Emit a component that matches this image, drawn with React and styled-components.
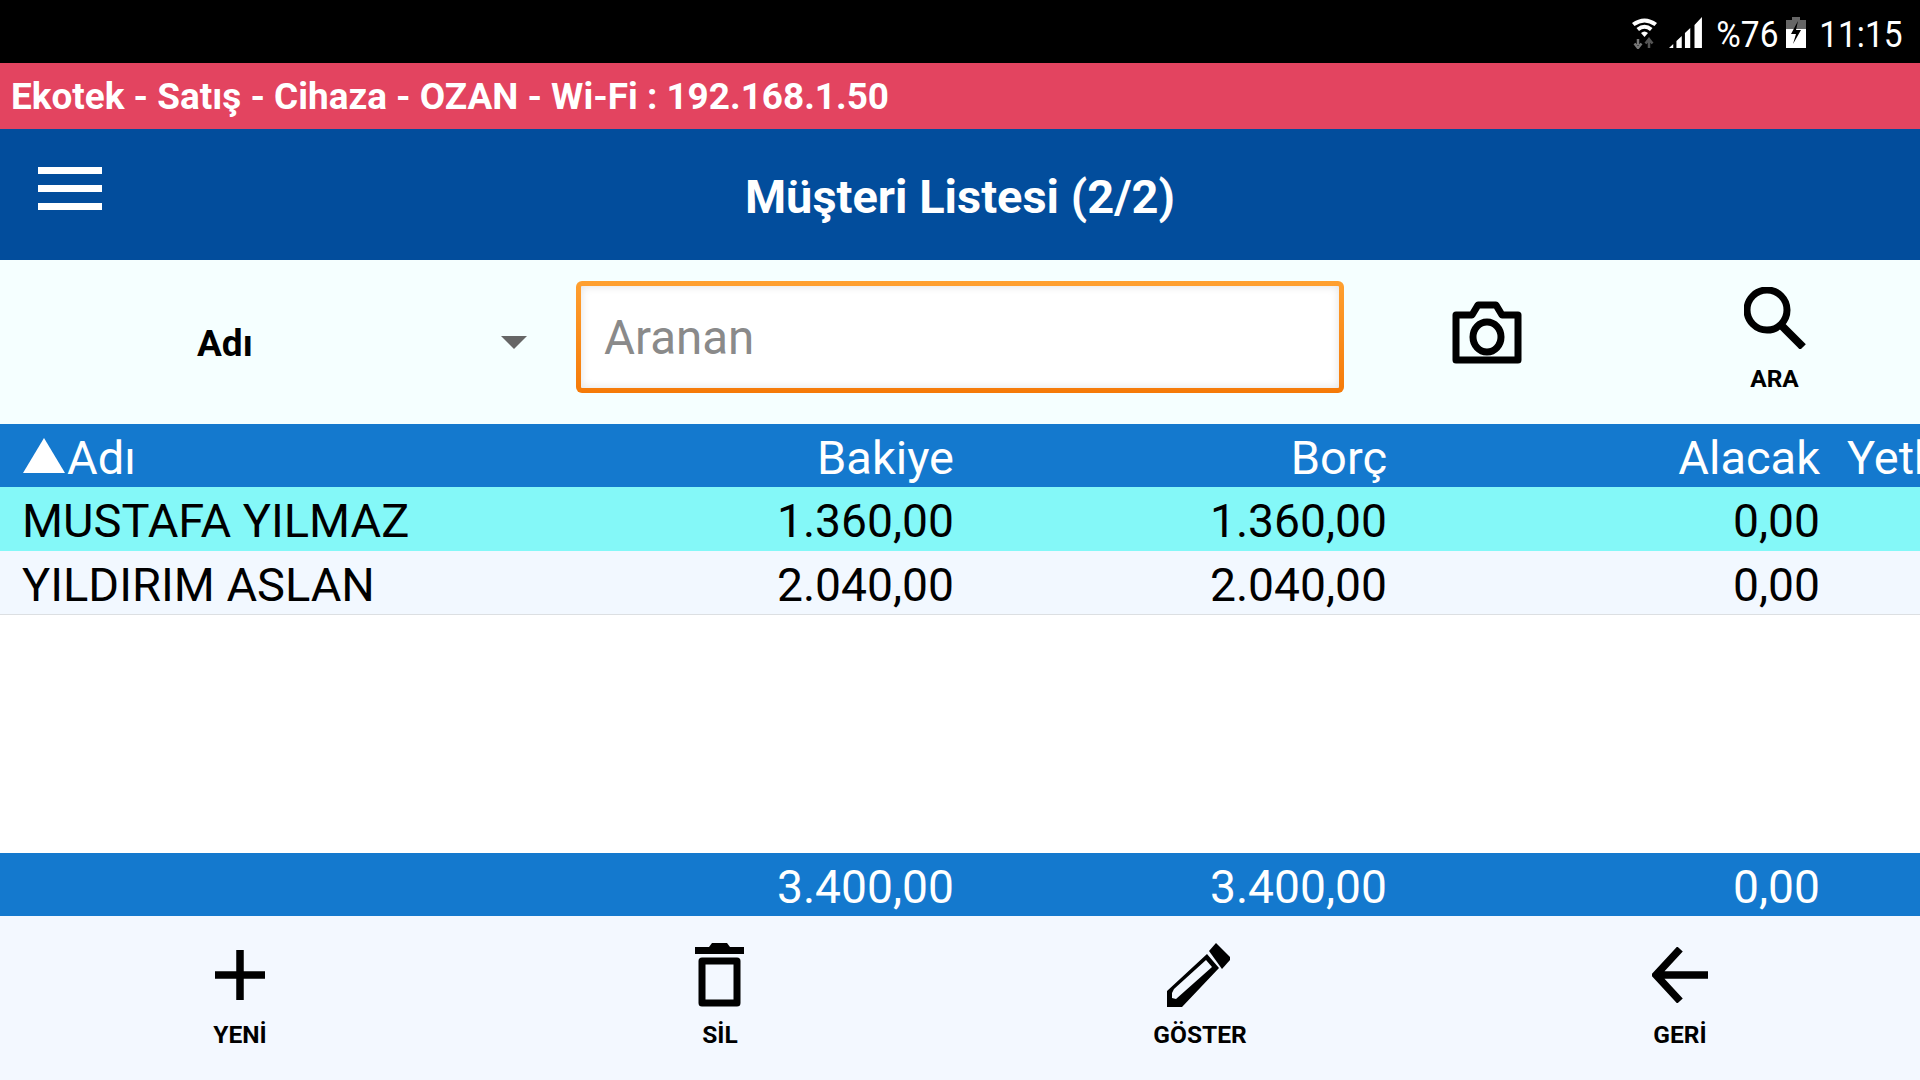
import React from 'react';
import styled, { createGlobalStyle } from 'styled-components';

const GlobalStyle = createGlobalStyle`
  html, body {
    margin: 0;
    padding: 0;
    background: #fff;
    overflow: hidden;
  }
  * { box-sizing: border-box; }
`;

const Page = styled.div`
  width: 1920px;
  height: 1080px;
  display: flex;
  flex-direction: column;
  overflow: hidden;
  font-family: Roboto, "Liberation Sans", sans-serif;
`;

const StatusBar = styled.div`
  height: 63px;
  background: #000;
  color: #fff;
  display: flex;
  align-items: center;
  justify-content: flex-end;
  padding: 2px 14px 0 0;
  font-size: 36px;
  line-height: 63px;
`;

const StatusText = styled.span`
  display: inline-block;
  position: relative;
  top: 3px;
  transform: scaleX(0.93);
  margin: ${(p) => p.$margin || '0'};
`;

const SystemIcon = styled.svg`
  display: block;
  flex: none;
  margin: ${(p) => p.$margin || '0'};
`;

const AppTitle = styled.div`
  height: 66px;
  background: #e34460;
  color: #fff;
  padding-left: 11px;
  font-size: 36.9px;
  font-weight: 700;
  line-height: 68px;
  white-space: nowrap;
`;

const NavBar = styled.div`
  height: 131px;
  background: #024d9c;
  position: relative;
  display: flex;
  align-items: center;
  justify-content: center;
  color: #fff;
  font-size: 47px;
  font-weight: 700;
  padding-top: 4px;
`;

const Burger = styled.div`
  position: absolute;
  left: 38px;
  top: 38px;
  width: 64px;
  display: flex;
  flex-direction: column;
  gap: 11px;
  span {
    display: block;
    height: 7px;
    background: #fff;
  }
`;

const SearchBar = styled.div`
  height: 164px;
  background: #f5ffff;
  display: flex;
  align-items: flex-start;
`;

const SelectBox = styled.div`
  width: 576px;
  height: 100%;
  padding: 57px 49px 0 197px;
  display: flex;
  justify-content: space-between;
  font-size: 37px;
  font-weight: 700;
  color: #000;
  line-height: 54px;
`;

const Caret = styled.div`
  width: 0;
  height: 0;
  margin-top: 19px;
  border-left: 13.5px solid transparent;
  border-right: 13.5px solid transparent;
  border-top: 13px solid #666;
`;

const SearchInput = styled.div`
  width: 768px;
  height: 112px;
  margin-top: 21px;
  padding: 6px 0 0 23px;
  border: 5px solid transparent;
  border-radius: 6px;
  background:
    linear-gradient(#fff, #fff) padding-box,
    linear-gradient(#ffa030, #f57a08) border-box;
  box-shadow: inset 0 0 10px rgba(0, 0, 0, 0.12);
  color: #8a8a8a;
  font-size: 47.5px;
  line-height: 92px;
`;

const CameraSlot = styled.div`
  width: 285px;
  display: flex;
  justify-content: center;
  padding-top: 41px;
`;

const SearchSlot = styled.div`
  width: 291px;
  display: flex;
  flex-direction: column;
  align-items: center;
  padding-top: 27px;
`;

const ToolIcon = styled.svg`
  display: block;
  flex: none;
  margin-left: ${(p) => p.$shift || 0}px;
`;

const ToolLabel = styled.div`
  font-size: 24.5px;
  font-weight: 700;
  line-height: 24px;
  color: #000;
  text-align: center;
  margin-top: ${(p) => p.$gap}px;
`;

const Row = styled.div`
  height: ${(p) => p.$height || 63}px;
  background: ${(p) => p.$bg};
  color: ${(p) => p.$color};
  border-bottom: ${(p) => (p.$line ? '1px solid #dcdfe2' : 'none')};
  display: grid;
  grid-template-columns: 521px 433px 433px 433px 100px;
  font-size: 47px;
  line-height: 68px;
  white-space: nowrap;
  overflow: hidden;
`;

const NameCell = styled.div`
  padding-left: 22px;
  display: flex;
  align-items: flex-start;
`;

const NumberCell = styled.div`
  text-align: right;
  font-size: ${(p) => (p.$heading ? 47 : 46.2)}px;
`;

const ExtraCell = styled.div`
  padding-left: 27px;
`;

const SortArrow = styled.div`
  width: 0;
  height: 0;
  margin: 14px 2px 0 1px;
  border-left: 21px solid transparent;
  border-right: 21px solid transparent;
  border-bottom: 35px solid #fff;
`;

const Blank = styled.div`
  flex: 1;
  background: #fff;
`;

const ToolBar = styled.div`
  height: 164px;
  background: #f3f8ff;
  display: grid;
  grid-template-columns: repeat(4, 480px);
`;

const ToolButton = styled.div`
  display: flex;
  flex-direction: column;
  align-items: center;
  padding-top: ${(p) => p.$top}px;
`;

const rows = [
  { name: 'MUSTAFA YILMAZ', bakiye: '1.360,00', borc: '1.360,00', alacak: '0,00', bg: '#84f8f8', line: false },
  { name: 'YILDIRIM ASLAN', bakiye: '2.040,00', borc: '2.040,00', alacak: '0,00', bg: '#f2f8ff', line: true },
];

function App() {
  return (
    <Page>
      <GlobalStyle />
      <StatusBar>
        <SystemIcon width="27" height="32" viewBox="0 0 27 32" $margin="0 11px 0 0">
          <path d="M1 6 Q13.5 -3 26 6 L23.5 9 Q13.5 2 3.5 9Z M5.5 11 Q13.5 4.5 21.5 11 L19 14 Q13.5 9.5 8 14Z M10 16 Q13.5 13 17 16 L13.5 20Z" fill="#fff" />
          <path d="M7 22v6M3.5 26.5L7 31l3.5-4.5" stroke="#777" strokeWidth="2.5" fill="none" />
          <path d="M18 31v-8M14.5 26.5L18 22l3.5 4.5" stroke="#555" strokeWidth="2.5" fill="none" />
        </SystemIcon>
        <SystemIcon width="34" height="31" viewBox="0 0 32 31" preserveAspectRatio="none" $margin="0 12px 0 0">
          <path d="M0 31L4 27V31Z M7 31V24L12 19V31Z M15 31V16L20 11V31Z M24 31V8L31 0V31Z" fill="#fff" />
        </SystemIcon>
        <StatusText $margin="0 0 0 -1px">%76</StatusText>
        <SystemIcon width="20" height="31" viewBox="0 0 20 31" $margin="0 10px 0 6px">
          <path d="M6 0H14V3H20V12H0V3H6Z" fill="#666" />
          <path d="M0 12H20V31H0Z" fill="#fff" />
          <path d="M12 4L5 17H10L7 27L15 13H10Z" fill="#000" />
        </SystemIcon>
        <StatusText>11:15</StatusText>
      </StatusBar>

      <AppTitle>Ekotek - Satış - Cihaza - OZAN - Wi-Fi : 192.168.1.50</AppTitle>

      <NavBar>
        <Burger>
          <span />
          <span />
          <span />
        </Burger>
        Müşteri Listesi (2/2)
      </NavBar>

      <SearchBar>
        <SelectBox>
          Adı
          <Caret />
        </SelectBox>
        <SearchInput>Aranan</SearchInput>
        <CameraSlot>
          <ToolIcon width="70" height="63" viewBox="0 0 70 63">
            <path d="M4 14H20L26 4H44L50 14H66V59H4Z" fill="none" stroke="#000" strokeWidth="7" strokeLinejoin="round" />
            <ellipse cx="35" cy="36" rx="14" ry="15" fill="none" stroke="#000" strokeWidth="7" />
          </ToolIcon>
        </CameraSlot>
        <SearchSlot>
          <ToolIcon width="62" height="62" viewBox="0 0 62 62">
            <ellipse cx="23" cy="23" rx="20" ry="20" fill="none" stroke="#000" strokeWidth="7" />
            <path d="M38 39L59 60" stroke="#000" strokeWidth="8" />
          </ToolIcon>
          <ToolLabel $gap={18}>ARA</ToolLabel>
        </SearchSlot>
      </SearchBar>

      <Row $bg="#1479ce" $color="#fff">
        <NameCell>
          <SortArrow />
          Adı
        </NameCell>
        <NumberCell $heading>Bakiye</NumberCell>
        <NumberCell $heading>Borç</NumberCell>
        <NumberCell $heading>Alacak</NumberCell>
        <ExtraCell>Yetkili</ExtraCell>
      </Row>
      {rows.map((r) => (
        <Row key={r.name} $bg={r.bg} $color="#000" $line={r.line} $height={64}>
          <NameCell>{r.name}</NameCell>
          <NumberCell>{r.bakiye}</NumberCell>
          <NumberCell>{r.borc}</NumberCell>
          <NumberCell>{r.alacak}</NumberCell>
        </Row>
      ))}

      <Blank />

      <Row $bg="#1479ce" $color="#fff">
        <NameCell />
        <NumberCell>3.400,00</NumberCell>
        <NumberCell>3.400,00</NumberCell>
        <NumberCell>0,00</NumberCell>
      </Row>

      <ToolBar>
        <ToolButton $top={34}>
          <ToolIcon width="50" height="50" viewBox="0 0 50 50" $shift={-1}>
            <path d="M0 25H50M25 0V50" stroke="#000" strokeWidth="7.5" />
          </ToolIcon>
          <ToolLabel $gap={23}>YENİ</ToolLabel>
        </ToolButton>
        <ToolButton $top={27}>
          <ToolIcon width="49" height="64" viewBox="0 0 49 64" $shift={-2}>
            <path d="M0 4H14L17 0H32L35 4H49V11H0Z" fill="#000" />
            <path d="M7 18H42V60H7Z" fill="none" stroke="#000" strokeWidth="7" strokeLinejoin="round" />
          </ToolIcon>
          <ToolLabel $gap={16}>SİL</ToolLabel>
        </ToolButton>
        <ToolButton $top={27}>
          <ToolIcon width="63" height="64" viewBox="0 0 63 64" $shift={-4}>
            <path d="M40 11L52 25L15 64H0V48Z M7 46L5 50V55L9 56L45 24L39 17Z" fill="#000" fillRule="evenodd" />
            <path d="M42 8L49 0L63 14V17L55 26Z" fill="#000" />
          </ToolIcon>
          <ToolLabel $gap={16}>GÖSTER</ToolLabel>
        </ToolButton>
        <ToolButton $top={31}>
          <ToolIcon width="56" height="56" viewBox="0 0 56 56" $shift={-1}>
            <path d="M56 28H6M28 2L4 28L28 54" fill="none" stroke="#000" strokeWidth="7.5" />
          </ToolIcon>
          <ToolLabel $gap={20}>GERİ</ToolLabel>
        </ToolButton>
      </ToolBar>
    </Page>
  );
}

export default App;
